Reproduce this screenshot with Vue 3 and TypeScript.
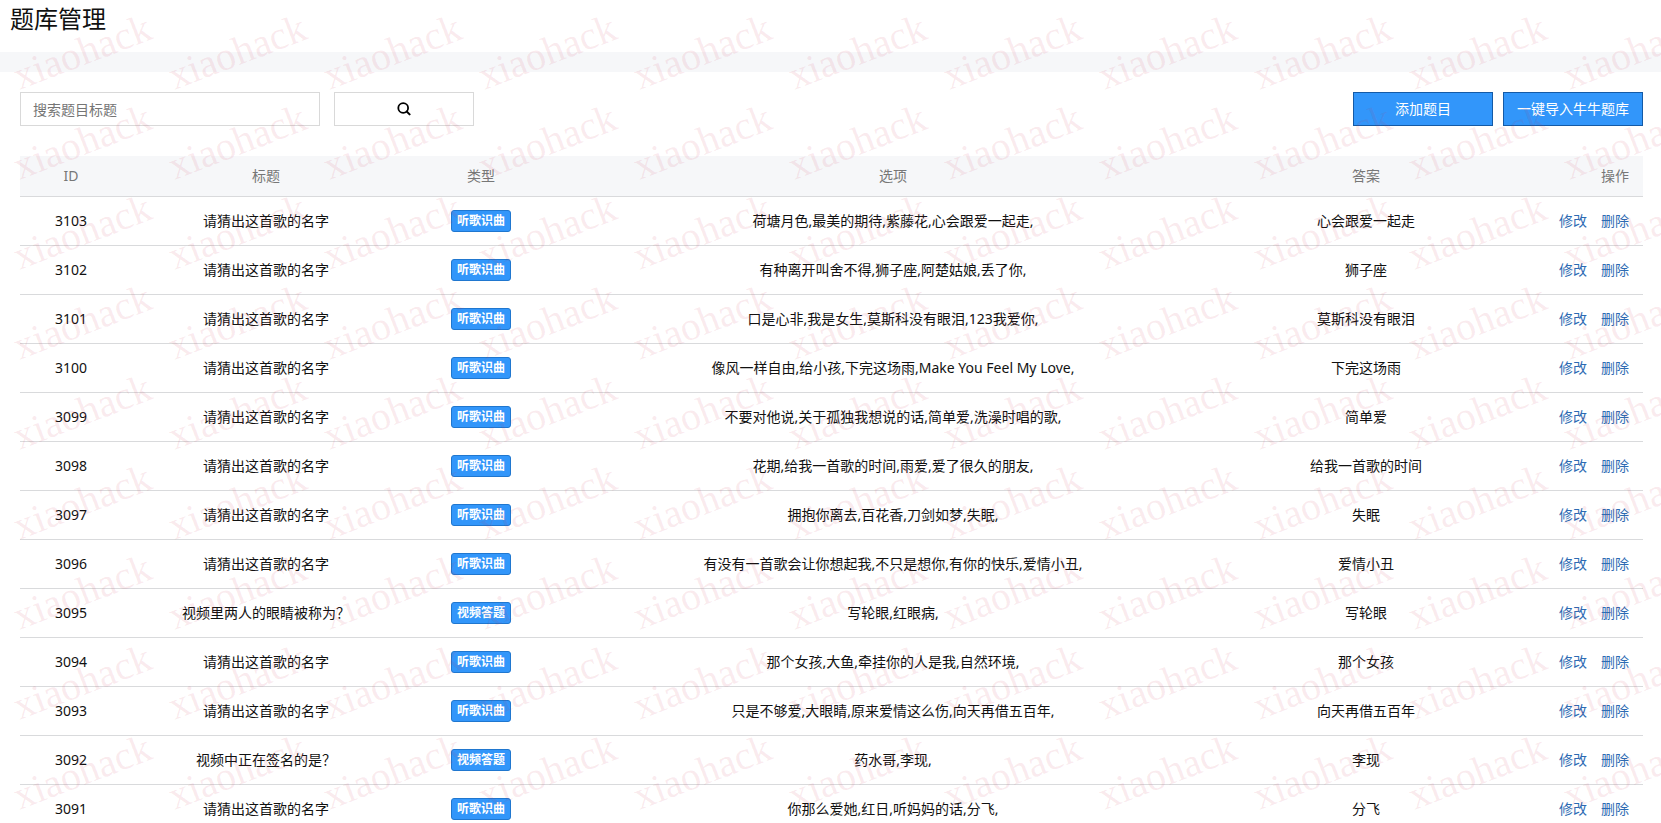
<script setup lang="ts">
import { ref } from 'vue'

interface Question {
  id: number
  title: string
  type: string
  options: string
  answer: string
}

const SONG = '听歌识曲'
const VIDEO = '视频答题'
const GUESS = '请猜出这首歌的名字'

const keyword = ref('')

const questions: Question[] = [
  { id: 3103, title: GUESS, type: SONG, options: '荷塘月色,最美的期待,紫藤花,心会跟爱一起走,', answer: '心会跟爱一起走' },
  { id: 3102, title: GUESS, type: SONG, options: '有种离开叫舍不得,狮子座,阿楚姑娘,丢了你,', answer: '狮子座' },
  { id: 3101, title: GUESS, type: SONG, options: '口是心非,我是女生,莫斯科没有眼泪,123我爱你,', answer: '莫斯科没有眼泪' },
  { id: 3100, title: GUESS, type: SONG, options: '像风一样自由,给小孩,下完这场雨,Make You Feel My Love,', answer: '下完这场雨' },
  { id: 3099, title: GUESS, type: SONG, options: '不要对他说,关于孤独我想说的话,简单爱,洗澡时唱的歌,', answer: '简单爱' },
  { id: 3098, title: GUESS, type: SONG, options: '花期,给我一首歌的时间,雨爱,爱了很久的朋友,', answer: '给我一首歌的时间' },
  { id: 3097, title: GUESS, type: SONG, options: '拥抱你离去,百花香,刀剑如梦,失眠,', answer: '失眠' },
  { id: 3096, title: GUESS, type: SONG, options: '有没有一首歌会让你想起我,不只是想你,有你的快乐,爱情小丑,', answer: '爱情小丑' },
  { id: 3095, title: '视频里两人的眼睛被称为？', type: VIDEO, options: '写轮眼,红眼病,', answer: '写轮眼' },
  { id: 3094, title: GUESS, type: SONG, options: '那个女孩,大鱼,牵挂你的人是我,自然环境,', answer: '那个女孩' },
  { id: 3093, title: GUESS, type: SONG, options: '只是不够爱,大眼睛,原来爱情这么伤,向天再借五百年,', answer: '向天再借五百年' },
  { id: 3092, title: '视频中正在签名的是？', type: VIDEO, options: '药水哥,李现,', answer: '李现' },
  { id: 3091, title: GUESS, type: SONG, options: '你那么爱她,红日,听妈妈的话,分飞,', answer: '分飞' },
]
</script>

<template>
  <div class="page">
    <header class="page-header">
      <h1>题库管理</h1>
    </header>

    <main class="panel">
      <div class="toolbar">
        <form class="search" @submit.prevent>
          <input v-model="keyword" type="text" placeholder="搜索题目标题" aria-label="搜索题目标题" />
          <button type="submit" class="btn" aria-label="搜索">
            <svg width="14" height="14" viewBox="0 0 14 14" aria-hidden="true">
              <circle cx="6.2" cy="6" r="4.9" fill="none" stroke="#000" stroke-width="1.8" />
              <path d="M9.7 9.5L12.6 12.4" stroke="#000" stroke-width="2" stroke-linecap="round" />
            </svg>
          </button>
        </form>
        <div class="actions">
          <button type="button" class="btn primary">添加题目</button>
          <button type="button" class="btn primary">一键导入牛牛题库</button>
        </div>
      </div>

      <table>
        <colgroup>
          <col class="c-id" />
          <col class="c-title" />
          <col class="c-type" />
          <col />
          <col class="c-answer" />
          <col class="c-ops" />
        </colgroup>
        <thead>
          <tr>
            <th>ID</th>
            <th>标题</th>
            <th>类型</th>
            <th>选项</th>
            <th>答案</th>
            <th class="ops">操作</th>
          </tr>
        </thead>
        <tbody>
          <tr v-for="q in questions" :key="q.id">
            <td>{{ q.id }}</td>
            <td>{{ q.title }}</td>
            <td><span class="tag">{{ q.type }}</span></td>
            <td>{{ q.options }}</td>
            <td>{{ q.answer }}</td>
            <td class="ops">
              <div class="links">
                <a href="#">修改</a>
                <a href="#">删除</a>
              </div>
            </td>
          </tr>
        </tbody>
      </table>
    </main>

    <div class="watermark" aria-hidden="true">
      <div v-for="n in 99" :key="n" class="mark"><span>xiaohack</span></div>
    </div>
  </div>
</template>

<style>
body {
  margin: 0;
  background: #fff;
}
</style>

<style scoped>
.page {
  position: relative;
  height: 100vh;
  overflow: hidden;
  background: #fff;
  color: #111;
  font-family: "Noto Sans", "Noto Sans CJK SC", sans-serif;
  font-size: 14px;
  line-height: 20px;
}

.page-header {
  padding: 2px 10px 18px;
  border-bottom: 20px solid #f6f7f9;
}

h1 {
  margin: 0;
  font-size: 24px;
  font-weight: 400;
  line-height: 32px;
  font-family: "Noto Sans CJK SC", sans-serif;
}

.panel {
  padding: 20px 18px 0 20px;
}

.toolbar {
  display: flex;
  justify-content: space-between;
  margin-bottom: 30px;
}

.search {
  display: flex;
  gap: 14px;
}

.actions {
  display: flex;
  gap: 10px;
}

input {
  box-sizing: border-box;
  width: 300px;
  height: 34px;
  padding: 0 12px;
  border: 1px solid #d9d9d9;
  background: #fff;
  color: #111;
  font: inherit;
}

input::placeholder {
  color: #757575;
}

.btn {
  box-sizing: border-box;
  display: flex;
  align-items: center;
  justify-content: center;
  width: 140px;
  height: 34px;
  padding: 0;
  border: 1px solid #d9d9d9;
  background: #fff;
  font: inherit;
  white-space: nowrap;
}

.primary {
  border-color: #145aa6;
  background: #3296fa;
  color: #fff;
}

table {
  width: 100%;
  table-layout: fixed;
  border-collapse: separate;
  border-spacing: 0;
}

.c-id {
  width: 102px;
}

.c-title {
  width: 288px;
}

.c-type {
  width: 142px;
}

.c-answer {
  width: 264px;
}

.c-ops {
  width: 145px;
}

th,
td {
  padding: 0;
  border-bottom: 1px solid #d9dadc;
  text-align: center;
  white-space: nowrap;
}

th {
  height: 40px;
  background: #f6f7f9;
  color: #777;
  font-weight: 400;
}

td {
  height: 48px;
}

.ops {
  padding-right: 14px;
  text-align: right;
}

.links {
  display: flex;
  justify-content: flex-end;
  gap: 14px;
}

a {
  color: #2d6bb3;
  text-decoration: none;
}

.tag {
  display: inline-block;
  padding: 0 5px;
  border: 1px solid #2077cf;
  border-radius: 3px;
  background: #3296fa;
  color: #fff;
  font-size: 12px;
  font-weight: 700;
  line-height: 20px;
  vertical-align: middle;
}

.watermark {
  position: absolute;
  inset: 0;
  display: grid;
  grid-template-columns: repeat(11, 155px);
  grid-auto-rows: 90px;
  padding: 7px 5px;
  overflow: hidden;
  pointer-events: none;
}

.mark {
  display: grid;
  place-items: center;
  color: rgba(205, 50, 80, 0.1);
  font-family: "Liberation Serif", serif;
  font-size: 40px;
  line-height: 40px;
}

.mark span {
  transform: rotate(-21deg);
}
</style>
